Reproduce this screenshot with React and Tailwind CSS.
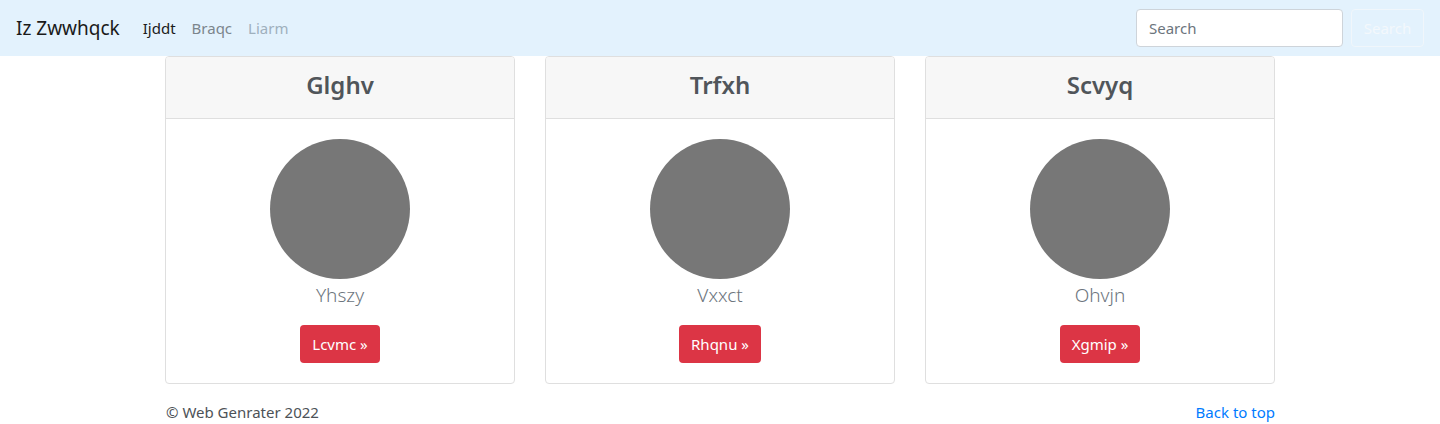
export default function App() {
  const cards = [
    { title: "Glghv", name: "Yhszy", btn: "Lcvmc" },
    { title: "Trfxh", name: "Vxxct", btn: "Rhqnu" },
    { title: "Scvyq", name: "Ohvjn", btn: "Xgmip" },
  ];
  return (
    <div className="min-h-[424px] bg-white" style={{ fontFamily: '"Noto Sans", "Open Sans", sans-serif' }}>
      <nav className="h-[56px] bg-[#e3f2fd] flex items-center px-4">
        <span className="text-[19px] text-[#1a1a1a] mr-[23px] leading-none">Iz Zwwhqck</span>
        <div className="flex items-center gap-[16px] text-[15px]">
          <span className="text-[#1a1a1a]">Ijddt</span>
          <span className="text-[#7b858c]">Braqc</span>
          <span className="text-[#9fb0bd]">Liarm</span>
        </div>
        <div className="ml-auto flex items-center gap-2">
          <div className="w-[207px] h-[38px] bg-white border border-[#ced4da] rounded-[4px] flex items-center px-3 text-[15px] text-[#6c757d]">Search</div>
          <div className="w-[73px] h-[38px] border border-[#f0f6fb] rounded-[4px] flex items-center justify-center text-[15px] text-[#f3f8fc]">Search</div>
        </div>
      </nav>
      <div className="w-[1140px] mx-auto px-[15px]">
        <div className="grid grid-cols-3 gap-[30px]">
          {cards.map((c) => (
            <div key={c.title} className="border border-[#dfdfdf] rounded-[4px] overflow-hidden flex flex-col">
              <div className="h-[62px] bg-[#f7f7f7] border-b border-[#dfdfdf] flex items-center justify-center pb-[5px]">
                <span className="text-[24px] font-semibold text-[#50555a]">{c.title}</span>
              </div>
              <div className="p-5 flex flex-col items-center">
                <div className="w-[140px] h-[140px] rounded-full bg-[#777777]" />
                <div className="text-[19px] font-light text-[#6c757d] mt-[2px] leading-[28px]">{c.name}</div>
                <div className="mt-[16px] h-[38px] px-3 bg-[#dc3545] rounded-[4px] text-white text-[15px] flex items-center">{c.btn} »</div>
              </div>
            </div>
          ))}
        </div>
        <div className="flex justify-between items-center mt-[17px] text-[15px]">
          <span className="text-[#4d5257] pl-[1px]">© Web Genrater 2022</span>
          <span className="text-[#007bff]">Back to top</span>
        </div>
      </div>
    </div>
  );
}
